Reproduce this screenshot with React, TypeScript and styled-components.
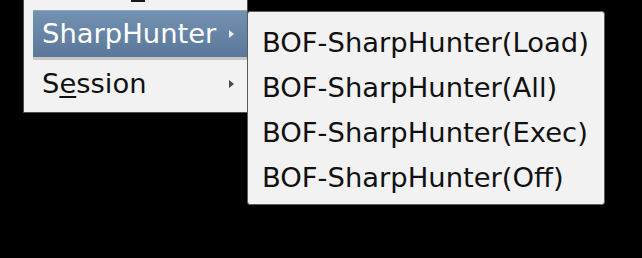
import React from "react";
import styled, { createGlobalStyle } from "styled-components";

const GlobalStyle = createGlobalStyle`
  html, body {
    margin: 0;
    padding: 0;
    background: #000;
  }
  body {
    width: 642px;
    height: 258px;
    overflow: hidden;
    font-family: "DejaVu Sans", "Liberation Sans", sans-serif;
  }
`;

const SScreen = styled.div`
  display: flex;
  align-items: flex-start;
  padding-left: 23px;
  font-size: 27.4px;
  color: #111;
`;

const SMenu = styled.div`
  width: 223px;
  background: #f2f2f2;
  border: 1px solid #4e4e4e;
  border-top: none;
  padding-bottom: 2px;
  display: flex;
  flex-direction: column;
`;

const STopStrip = styled.div`
  height: 10px;
  padding-left: 107px;
`;

const SMnemonicMark = styled.div`
  width: 14px;
  height: 2px;
  background: #1a1a1a;
`;

const SMenuItem = styled.div<{ $active?: boolean }>`
  display: flex;
  align-items: center;
  justify-content: space-between;
  margin-left: 9px;
  height: 46px;
  padding: 0 13px 0 9px;
  line-height: 46px;
  white-space: nowrap;
  color: ${(p) => (p.$active ? "#fff" : "#111")};
  background: ${(p) =>
    p.$active ? "linear-gradient(#7391b1, #5a7799)" : "transparent"};
  border-top: 1px solid ${(p) => (p.$active ? "#8fa6c0" : "transparent")};
  border-bottom: 3px solid ${(p) => (p.$active ? "#c6c6c6" : "transparent")};
`;

const SArrow = styled.span<{ $light?: boolean }>`
  width: 0;
  height: 0;
  border-top: 4px solid transparent;
  border-bottom: 4px solid transparent;
  border-left: 5px solid ${(p) => (p.$light ? "#e9eef4" : "#4a4a4a")};
`;

const SMnemonic = styled.span`
  text-decoration: underline;
  text-decoration-thickness: 2px;
  text-underline-offset: 3px;
`;

const SSubMenu = styled.div`
  margin-left: -1px;
  margin-top: 11px;
  width: 356px;
  background: #f2f2f2;
  border: 1px solid #5c5c5c;
  border-radius: 3px;
  padding: 8px 0 4px;
  display: flex;
  flex-direction: column;
`;

const SSubItem = styled.div`
  height: 45px;
  line-height: 45px;
  padding-left: 14px;
  white-space: nowrap;
`;

const subItems = [
  "BOF-SharpHunter(Load)",
  "BOF-SharpHunter(All)",
  "BOF-SharpHunter(Exec)",
  "BOF-SharpHunter(Off)",
];

export default function App() {
  return (
    <>
      <GlobalStyle />
      <SScreen>
        <SMenu>
          <STopStrip>
            <SMnemonicMark />
          </STopStrip>
          <SMenuItem $active>
            <span>SharpHunter</span>
            <SArrow $light />
          </SMenuItem>
          <SMenuItem>
            <span>
              S<SMnemonic>e</SMnemonic>ssion
            </span>
            <SArrow />
          </SMenuItem>
        </SMenu>
        <SSubMenu>
          {subItems.map((label) => (
            <SSubItem key={label}>{label}</SSubItem>
          ))}
        </SSubMenu>
      </SScreen>
    </>
  );
}
